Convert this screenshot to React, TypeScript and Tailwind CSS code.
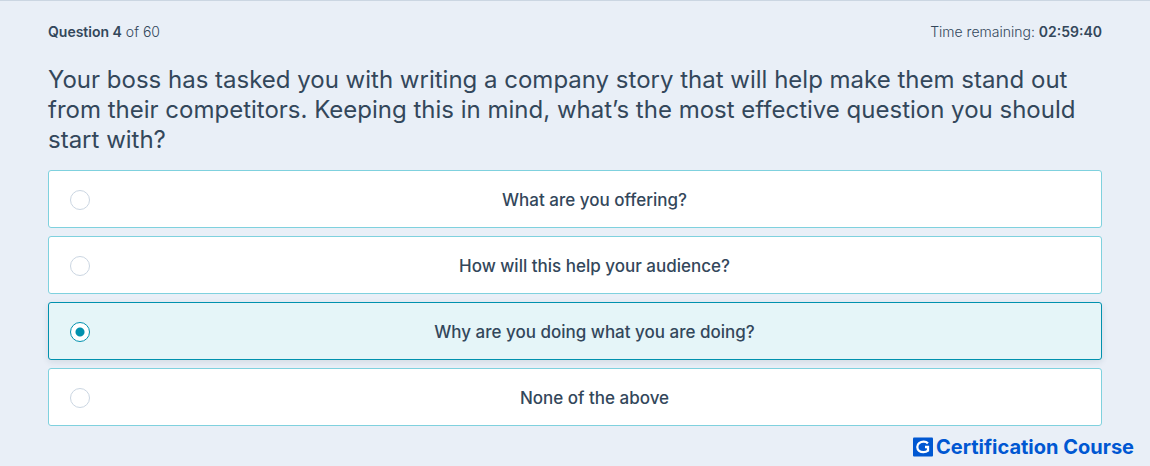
import { useState } from "react";
import clsx from "clsx";

const options = [
  "What are you offering?",
  "How will this help your audience?",
  "Why are you doing what you are doing?",
  "None of the above",
];

function Brand() {
  return (
    <footer className="flex items-center justify-end gap-[3px] px-4 pt-[11px] font-['Inter',sans-serif] text-[#0057d2]">
      <svg className="h-5 w-5" viewBox="0 0 20 20" fill="none" aria-hidden="true">
        <rect width="20" height="19" y="0.5" rx="1" fill="currentColor" />
        <path
          d="M14.9 6.4C13.8 5.2 12.4 4.7 10.7 4.7C7.1 4.7 4.3 6.9 4.3 10C4.3 13.1 7 15.2 10.5 15.2C12.2 15.2 13.8 14.7 15 13.7V10H12"
          stroke="#fff"
          strokeWidth="2.3"
        />
      </svg>
      <span className="text-[20px] leading-5 font-bold">Certification Course</span>
    </footer>
  );
}

export default function App() {
  const [selected, setSelected] = useState(2);

  return (
    <div className="min-h-screen border-t border-[#cbd6e2] bg-[#e9eff7] font-['Inter',sans-serif] text-[#33475b]">
      <main className="px-12 pt-[19px]">
        <div className="flex items-center justify-between text-[14px] leading-6 font-light">
          <p>
            <span className="font-semibold">Question 4</span> of 60
          </p>
          <p>
            Time remaining: <span className="font-semibold">02:59:40</span>
          </p>
        </div>

        <fieldset className="mt-[21px]">
          <legend className="mb-[15px] text-[24px] leading-[30px] font-normal">
            Your boss has tasked you with writing a company story that will help make them stand out
            from their competitors. Keeping this in mind, what’s the most effective question you
            should start with?
          </legend>
          <div className="flex flex-col gap-2">
            {options.map((option, i) => (
              <label
                key={option}
                className={clsx(
                  "flex h-[58px] cursor-pointer items-center rounded-[3px] border pt-0.5 pr-0.5 pl-[21px]",
                  selected === i
                    ? "border-[#0091ae] bg-[#e5f5f8] shadow-[0_2px_6px_rgba(45,62,80,0.12)]"
                    : "border-[#7fd1de] bg-white"
                )}
              >
                <input
                  type="radio"
                  name="answer"
                  checked={selected === i}
                  onChange={() => setSelected(i)}
                  className="h-5 w-5 shrink-0 appearance-none rounded-full border border-[#cbd6e2] bg-white checked:border-[#0091ae] checked:bg-[radial-gradient(circle,#0091ae_4px,white_5px)]"
                />
                <span className="flex-1 text-center text-[17px] leading-6 font-medium">
                  {option}
                </span>
              </label>
            ))}
          </div>
        </fieldset>
      </main>
      <Brand />
    </div>
  );
}
